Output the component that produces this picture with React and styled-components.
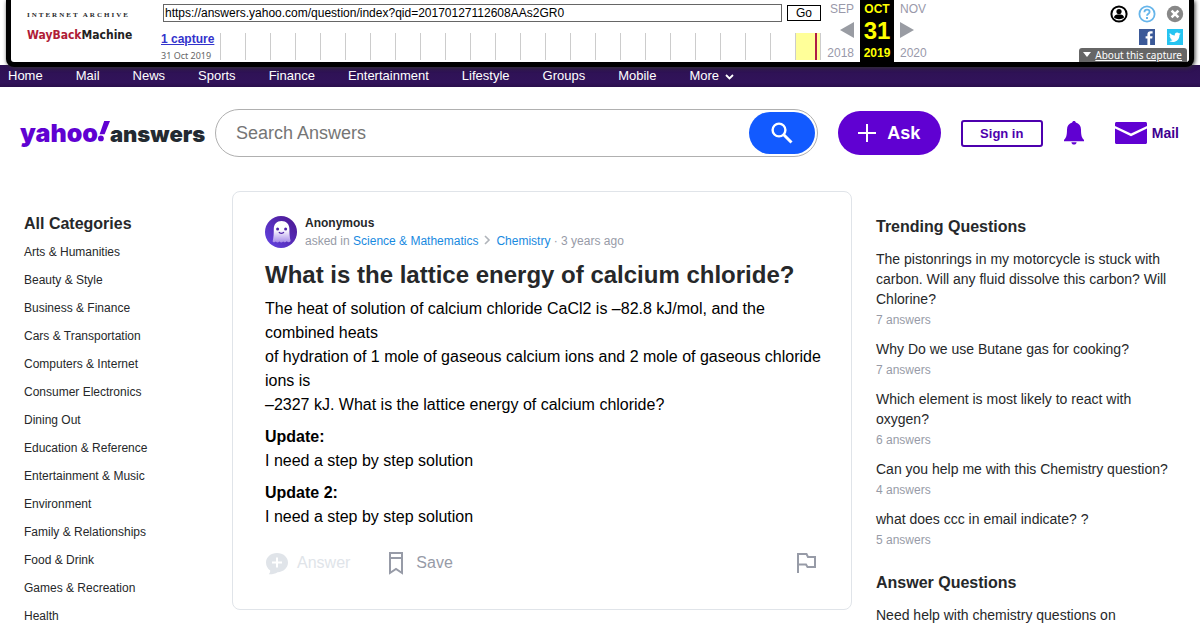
import React from 'react';
import styled, { createGlobalStyle } from 'styled-components';

const navLinks = [
  'Home',
  'Mail',
  'News',
  'Sports',
  'Finance',
  'Entertainment',
  'Lifestyle',
  'Groups',
  'Mobile',
];

const categories = [
  'Arts & Humanities',
  'Beauty & Style',
  'Business & Finance',
  'Cars & Transportation',
  'Computers & Internet',
  'Consumer Electronics',
  'Dining Out',
  'Education & Reference',
  'Entertainment & Music',
  'Environment',
  'Family & Relationships',
  'Food & Drink',
  'Games & Recreation',
  'Health',
];

const trending = [
  {
    title:
      'The pistonrings in my motorcycle is stuck with carbon. Will any fluid dissolve this carbon? Will Chlorine?',
    answers: 7,
  },
  { title: 'Why Do we use Butane gas for cooking?', answers: 7 },
  { title: 'Which element is most likely to react with oxygen?', answers: 6 },
  { title: 'Can you help me with this Chemistry question?', answers: 4 },
  { title: 'what does ccc in email indicate? ?', answers: 5 },
];

const years = Array.from({ length: 24 }, (_, i) => 1996 + i);

const ArchiveBar = () => (
  <Toolbar>
    <ArchiveLogo href='#archive'>
      <small>INTERNET ARCHIVE</small>
      <strong>
        <em>WayBack</em>Machine
      </strong>
    </ArchiveLogo>
    <Lookup>
      <UrlForm onSubmit={(e) => e.preventDefault()}>
        <input
          type='text'
          aria-label='Archived address'
          defaultValue='https://answers.yahoo.com/question/index?qid=20170127112608AAs2GR0'
        />
        <button type='submit'>Go</button>
      </UrlForm>
      <Captures>
        <CaptureCount>
          <a href='#captures'>1 capture</a>
          <span>31 Oct 2019</span>
        </CaptureCount>
        <Timeline>
          {years.map((year) => (
            <Year key={year} $active={year === 2019} />
          ))}
        </Timeline>
      </Captures>
    </Lookup>
    <DateColumn $align='right'>
      <span>SEP</span>
      <svg width='14' height='16' viewBox='0 0 14 16'>
        <path d='M14 0v16L0 8z' fill='#999ca3' />
      </svg>
      <span>2018</span>
    </DateColumn>
    <CurrentDate>
      <span>OCT</span>
      <strong>31</strong>
      <span>2019</span>
    </CurrentDate>
    <DateColumn $align='left'>
      <span>NOV</span>
      <svg width='14' height='16' viewBox='0 0 14 16'>
        <path d='M0 0v16l14-8z' fill='#999ca3' />
      </svg>
      <span>2020</span>
    </DateColumn>
    <Tools>
      <ToolRow>
        <IconButton aria-label='Account'>
          <svg width='18' height='18' viewBox='0 0 18 18'>
            <circle cx='9' cy='9' r='7.6' fill='#fff' stroke='#000' strokeWidth='2' />
            <circle cx='9' cy='6.6' r='2.6' />
            <path d='M4 12.6c0-2 2-3.2 3.4-3.2h3.2c1.400 0 3.400 1.200 3.400 3.200-1.200 1-3 1.600-5 1.600s-3.800-.6-5-1.600z' />
          </svg>
        </IconButton>
        <IconButton aria-label='Help'>
          <svg width='18' height='18' viewBox='0 0 18 18' fill='none' stroke='#66b5ea'>
            <circle cx='9' cy='9' r='7.6' strokeWidth='1.800' />
            <path d='M6.400 7.200c0-3.400 5.200-3.200 5.200-.2 0 1.800-2.600 1.900-2.600 3.800' strokeWidth='1.800' />
            <path d='M9 12v2' strokeWidth='2' />
          </svg>
        </IconButton>
        <IconButton aria-label='Close'>
          <svg width='18' height='18' viewBox='0 0 18 18'>
            <circle cx='9' cy='9' r='8.200' fill='#888' />
            <path d='M5.600 5.600l6.800 6.800M12.400 5.600l-6.800 6.800' stroke='#fff' strokeWidth='2.600' />
          </svg>
        </IconButton>
      </ToolRow>
      <ToolRow>
        <IconButton aria-label='Share on Facebook'>
          <svg width='16' height='16' viewBox='0 0 16 16'>
            <path d='M0 0h16v16H0z' fill='#3b5998' />
            <path
              d='M8.400 16V9.600H6.600V7.200h1.800V5.400c0-2 1.200-3.200 3.200-3.200h2v2.400h-1.400c-.8 0-1.100.4-1.100 1.100v1.500h2.500l-.4 2.400h-2.100V16z'
              fill='#fff'
            />
          </svg>
        </IconButton>
        <IconButton aria-label='Share on Twitter'>
          <svg width='16' height='16' viewBox='0 0 16 16'>
            <path d='M0 0h16v16H0z' fill='#26c4f1' />
            <path
              d='M13.700 4.600c-.4.200-.9.300-1.300.4.500-.3.800-.7 1-1.300-.500.300-1 .5-1.500.6a2.400 2.400 0 0 0-4.100 2.200C5.800 6.400 4 5.400 2.900 4c-.7 1.100-.3 2.500.7 3.200-.4 0-.7-.1-1.100-.3 0 1.200.8 2.100 1.900 2.400-.3.100-.7.100-1.100 0 .3 1 1.200 1.700 2.300 1.700-1 .8-2.200 1.100-3.500 1 3.900 2.400 10.400.8 10.400-6.200.5-.3.900-.7 1.200-1.200z'
              fill='#fff'
            />
          </svg>
        </IconButton>
      </ToolRow>
      <AboutButton>
        <svg width='8' height='5' viewBox='0 0 8 5'>
          <path d='M0 0h8L4 5z' fill='#fff' />
        </svg>
        <span>About this capture</span>
      </AboutButton>
    </Tools>
  </Toolbar>
);

const Header = () => (
  <HeaderBar>
    <YahooLogo href='#home' aria-label='Yahoo Answers'>
      <span>yahoo</span>
      <svg width='12' height='22' viewBox='0 0 12 22' fill='#6001d2'>
        <path d='M6.200 0H12L6.600 13.200H1.600z' />
        <circle cx='2.900' cy='17.400' r='2.900' />
      </svg>
      <strong>answers</strong>
    </YahooLogo>
    <SearchForm onSubmit={(e) => e.preventDefault()}>
      <input type='text' aria-label='Search Answers' placeholder='Search Answers' />
      <button type='submit' aria-label='Search'>
        <svg width='22' height='22' viewBox='0 0 22 22' fill='none' stroke='#fff'>
          <circle cx='8' cy='8' r='6.400' strokeWidth='2.400' />
          <path d='M12.500 12.500l8 8' strokeWidth='3' />
        </svg>
      </button>
    </SearchForm>
    <AskButton>
      <svg width='18' height='18' viewBox='0 0 18 18' stroke='#fff' strokeWidth='2'>
        <path d='M9 0v18M0 9h18' />
      </svg>
      Ask
    </AskButton>
    <SignIn href='#signin'>Sign in</SignIn>
    <BellButton aria-label='Notifications'>
      <svg width='20' height='24' viewBox='0 0 20 24' fill='#6001d2'>
        <path d='M10 0c1 0 1.700.7 1.800 1.600C15 2.400 17 5 17 8.400c0 5.600.8 8.600 3 10.400v1.400H0v-1.400c2.200-1.800 3-4.800 3-10.400C3 5 5 2.400 8.200 1.600 8.300.7 9 0 10 0z' />
        <path d='M7.400 21.200h5.200c-.2 1.500-1.200 2.400-2.600 2.400s-2.400-.9-2.600-2.400z' />
      </svg>
    </BellButton>
    <MailLink href='#mail'>
      <svg width='32' height='22' viewBox='0 0 32 22' fill='#6001d2'>
        <path d='M1.500 0h29c.8 0 1.500.7 1.500 1.500V4L16 11.500 0 4V1.500C0 .7.700 0 1.500 0z' />
        <path d='M0 6.600l16 7.600 16-7.600v13.900c0 .8-.7 1.500-1.500 1.500h-29C.7 22 0 21.300 0 20.500z' />
      </svg>
      Mail
    </MailLink>
  </HeaderBar>
);

const Ghost = () => (
  <svg width='32' height='32' viewBox='0 0 32 32'>
    <defs>
      <linearGradient id='avatar' x1='0' y1='1' x2='1' y2='0'>
        <stop offset='0' stopColor='#6345e6' />
        <stop offset='1' stopColor='#4a148c' />
      </linearGradient>
      <linearGradient id='ghost' x1='0' y1='0' x2='0' y2='1'>
        <stop offset='0.400' stopColor='#fff' />
        <stop offset='1' stopColor='#a58ae8' />
      </linearGradient>
    </defs>
    <circle cx='16' cy='16' r='16' fill='url(#avatar)' />
    <path
      d='M8.800 13c0-4.800 3-8 7.700-8s7.900 3.200 7.900 8c0 4 .2 8 1.200 12-1.200 1.500-2.600 1.600-3.800.2-1.200 1.500-2.600 1.500-3.600.2-1.200 1.500-2.600 1.500-3.800.1-1.200 1.500-2.600 1.400-3.600.1-1 1-2 1-3.200-.2 1.100-4 1.200-8.400 1.200-12.400z'
      fill='url(#ghost)'
    />
    <circle cx='12.600' cy='13' r='1.500' fill='#4f22a8' />
    <circle cx='20.600' cy='13' r='1.500' fill='#4f22a8' />
    <path d='M14 16c.8 1.800 4 1.800 4.800 0' fill='none' stroke='#4f22a8' strokeWidth='1.400' />
  </svg>
);

const Question = () => (
  <Card>
    <Author>
      <Ghost />
      <div>
        <strong>Anonymous</strong>
        <p>
          asked in <a href='#science'>Science &amp; Mathematics</a>
          <svg width='18' height='10' viewBox='0 0 18 10'>
            <path d='M7 1l4 4-4 4' fill='none' stroke='#b0b4ba' strokeWidth='1.600' />
          </svg>
          <a href='#chemistry'>Chemistry</a> · 3 years ago
        </p>
      </div>
    </Author>
    <h1>What is the lattice energy of calcium chloride?</h1>
    <Text>
      The heat of solution of calcium chloride CaCl2 is –82.8 kJ/mol, and the combined heats
      <br />
      of hydration of 1 mole of gaseous calcium ions and 2 mole of gaseous chloride ions is
      <br />
      –2327 kJ. What is the lattice energy of calcium chloride?
    </Text>
    <Text>
      <strong>Update:</strong>
      I need a step by step solution
    </Text>
    <Text>
      <strong>Update 2:</strong>
      I need a step by step solution
    </Text>
    <Actions>
      <ActionButton disabled>
        <svg width='24' height='24' viewBox='0 0 24 24'>
          <path
            d='M12 2c6.200 0 11 4.200 11 9.500S18.400 21 12.600 21.200C10 22.800 7 23.400 3.800 23.200c1-1 1.500-2.200 1.400-3.600C2.600 17.800 1 14.800 1 11.500 1 6.200 5.800 2 12 2z'
            fill='#e0e4e9'
          />
          <path d='M12 6.500v10M7 11.500h10' stroke='#fff' strokeWidth='2' />
        </svg>
        Answer
      </ActionButton>
      <ActionButton>
        <svg width='24' height='24' viewBox='0 0 24 24' fill='none' stroke='#979ba7' strokeWidth='2'>
          <path d='M6 2h12v20l-6-4-6 4z' />
          <path d='M6 7h12' />
        </svg>
        Save
      </ActionButton>
      <ActionButton aria-label='Report'>
        <svg width='24' height='24' viewBox='0 0 24 24' fill='none' stroke='#979ba7' strokeWidth='2'>
          <path d='M5 22V3h8.500l1.500 3h7v10h-7.500L13 13.500H5' />
        </svg>
      </ActionButton>
    </Actions>
  </Card>
);

const App = () => (
  <>
    <GlobalStyle />
    <ArchiveBar />
    <TopNav>
      {navLinks.map((link) => (
        <a key={link} href={`#${link.toLowerCase()}`}>
          {link}
        </a>
      ))}
      <a href='#more'>
        More
        <svg width='9' height='6' viewBox='0 0 9 6'>
          <path d='M1 1l3.500 3.500L8 1' fill='none' stroke='#fff' strokeWidth='1.800' />
        </svg>
      </a>
    </TopNav>
    <Header />
    <Page>
      <Sidebar>
        <h2>All Categories</h2>
        <ul>
          {categories.map((name) => (
            <li key={name}>
              <a href='#category'>{name}</a>
            </li>
          ))}
        </ul>
      </Sidebar>
      <Question />
      <Aside>
        <h2>Trending Questions</h2>
        {trending.map(({ title, answers }) => (
          <Related key={title}>
            <a href='#question'>{title}</a>
            <span>{answers} answers</span>
          </Related>
        ))}
        <h2>Answer Questions</h2>
        <Related>
          <a href='#question'>Need help with chemistry questions on</a>
        </Related>
      </Aside>
    </Page>
  </>
);

const GlobalStyle = createGlobalStyle`
  * {
    box-sizing: border-box;
    margin: 0;
    padding: 0;
  }
  body {
    background: #fff;
    color: #26282a;
    font-family: 'Liberation Sans', Arial, sans-serif;
  }
  a {
    color: inherit;
    text-decoration: none;
  }
  button {
    background: none;
    border: none;
    font-family: inherit;
    cursor: pointer;
  }
  ul {
    list-style: none;
  }
  svg {
    flex: none;
  }
`;

const Toolbar = styled.div`
  position: relative;
  z-index: 1;
  display: flex;
  height: 67px;
  margin: 0 6px -2px;
  background: #fff;
  border: 5px solid #000;
  border-top: none;
  border-radius: 0 0 8px 8px;
  box-shadow: 1px 1px 4px #333;
`;

const ArchiveLogo = styled.a`
  flex: none;
  width: 150px;
  padding: 11px 0 0 16px;
  white-space: nowrap;

  small {
    display: block;
    font: bold 7px/8px 'Liberation Serif', serif;
    letter-spacing: 2px;
  }
  strong {
    display: block;
    font: bold 12px/32px 'DejaVu Sans Condensed', 'DejaVu Sans', sans-serif;
    color: #222;
  }
  em {
    font-style: normal;
    color: #b01c36;
  }
`;

const Lookup = styled.div`
  flex: 0 1 660px;
`;

const UrlForm = styled.form`
  display: flex;
  align-items: center;
  gap: 5px;
  padding: 4px 0 0 2px;

  input {
    flex: 1;
    min-width: 0;
    height: 18px;
    padding: 0 1px;
    border: 1px solid #666;
    font: 12px 'Liberation Sans', Arial, sans-serif;
    color: #000;
  }
  button {
    width: 34px;
    height: 16px;
    border: 1px solid #000;
    font-size: 12px;
    line-height: 14px;
    color: #000;
  }
`;

const Captures = styled.div`
  display: flex;
  justify-content: space-between;
  margin-top: 11px;
`;

const CaptureCount = styled.div`
  display: flex;
  flex-direction: column;

  a {
    font-size: 12px;
    line-height: 13px;
    font-weight: bold;
    color: #33c;
    text-decoration: underline;
  }
  span {
    margin-top: 4px;
    font: 9px/11px 'Noto Sans', sans-serif;
    color: #666;
  }
`;

const Timeline = styled.div`
  display: flex;
  height: 27px;
  border-right: 1px solid #ccc;
`;

const Year = styled.div`
  width: 25px;
  border-left: 1px solid #ccc;
  background: ${({ $active }) =>
    $active
      ? 'linear-gradient(90deg, transparent 19px, #b01c46 19px, #b01c46 21px, transparent 21px) #ff9'
      : 'none'};
`;

const DateColumn = styled.div`
  display: flex;
  flex-direction: column;
  align-items: ${({ $align }) => ($align === 'right' ? 'flex-end' : 'flex-start')};
  width: ${({ $align }) => ($align === 'right' ? '39px' : '34px')};
  padding: 2px 6px 0;
  font-size: 12px;
  line-height: 14px;
  color: #99a;

  svg {
    margin: 6px 0 8px;
  }
`;

const CurrentDate = styled.div`
  display: flex;
  flex-direction: column;
  align-items: center;
  width: 34px;
  padding-top: 2px;
  background: #000;
  color: #ff0;
  font-size: 12px;
  line-height: 14px;
  font-weight: bold;

  strong {
    font-size: 24px;
    line-height: 30px;
  }
`;

const Tools = styled.div`
  display: flex;
  flex: 1;
  flex-direction: column;
  align-items: flex-end;
  gap: 6px;
  padding: 5px 2px 0 0;
`;

const ToolRow = styled.div`
  display: flex;
  gap: 10px;
  padding-right: 3px;

  & + & {
    gap: 12px;
    padding-right: 4px;
  }
`;

const IconButton = styled.button`
  display: block;

  svg {
    display: block;
  }
`;

const AboutButton = styled.button`
  display: flex;
  margin-top: -3px;
  gap: 4px;
  padding: 0 5px 0 4px;
  background: #666;
  border-radius: 3px 3px 0 0;
  color: #fff;
  font: 10px/14px 'Noto Sans', sans-serif;

  svg {
    margin-top: 4px;
  }
  span {
    text-decoration: underline;
    white-space: nowrap;
  }
`;

const TopNav = styled.nav`
  display: flex;
  gap: 33px;
  height: 22px;
  padding: 0 8px;
  background: linear-gradient(#2d1152, #31135a 80%, #2a0f4c);
  color: #fff;
  font-size: 13px;
  line-height: 21px;

  svg {
    margin-left: 6px;
  }
`;

const HeaderBar = styled.header`
  display: flex;
  align-items: center;
  padding: 22px 21px 0 20px;
`;

const YahooLogo = styled.a`
  display: flex;
  align-items: baseline;
  flex: none;
  width: 195px;
  font: 900 25px/30px Inter, sans-serif;
  color: #6001d2;

  svg {
    align-self: flex-start;
    margin-top: 3px;
  }
  strong {
    font-size: 22px;
    font-weight: 900;
    color: #232a31;
  }
`;

const SearchForm = styled.form`
  display: flex;
  flex: 1;
  height: 48px;
  padding: 2px;
  border: 1px solid #b0b0b0;
  border-radius: 24px;

  input {
    flex: 1;
    min-width: 0;
    padding: 0 18px;
    border: none;
    outline: none;
    background: none;
    font: 18px 'Liberation Sans', Arial, sans-serif;

    &::placeholder {
      color: #757575;
    }
  }
  button {
    display: flex;
    align-items: center;
    justify-content: center;
    width: 66px;
    background: #125aff;
    border-radius: 21px;
  }
`;

const AskButton = styled.button`
  display: flex;
  align-items: center;
  justify-content: center;
  gap: 11px;
  width: 103px;
  height: 44px;
  margin-left: 20px;
  background: #6001d2;
  border-radius: 22px;
  color: #fff;
  font-size: 18px;
  font-weight: bold;
`;

const SignIn = styled.a`
  width: 82px;
  margin-left: 20px;
  border: 2px solid #4d00ae;
  border-radius: 3px;
  color: #4d00ae;
  font-size: 13px;
  line-height: 23px;
  font-weight: bold;
  text-align: center;
`;

const BellButton = styled(IconButton)`
  margin-left: 21px;
`;

const MailLink = styled.a`
  display: flex;
  align-items: center;
  gap: 5px;
  margin-left: 31px;
  color: #400090;
  font-size: 14px;
  font-weight: bold;
`;

const Page = styled.div`
  display: flex;
  align-items: flex-start;
  gap: 24px;
  padding: 34px 24px 0;

  h2 {
    font-size: 16px;
    line-height: 20px;
  }
`;

const Sidebar = styled.nav`
  flex: none;
  width: 184px;
  padding-top: 23px;
  font-size: 12px;
  line-height: 28px;

  ul {
    margin-top: 4px;
  }
`;

const Card = styled.main`
  flex: 1;
  padding: 24px 24px 34px 32px;
  border: 1px solid #e0e4e9;
  border-radius: 8px;

  h1 {
    margin: 7px 0 6px;
    font-size: 24px;
    line-height: 32px;
  }
`;

const Author = styled.div`
  display: flex;
  gap: 8px;
  font-size: 12px;
  color: #979ba7;

  strong {
    display: block;
    line-height: 14px;
    color: #26282a;
  }
  p {
    line-height: 22px;
  }
  a {
    color: #188adf;
  }
`;

const Text = styled.p`
  margin-bottom: 8px;
  font-size: 16px;
  line-height: 24px;
  color: #000;

  strong {
    display: block;
  }
`;

const Actions = styled.div`
  display: flex;
  gap: 34px;
  margin-top: 22px;
  padding-right: 10px;
`;

const ActionButton = styled.button`
  display: flex;
  align-items: center;
  gap: 8px;
  font-size: 16px;
  line-height: 24px;
  color: #979ba7;

  &:disabled {
    color: #e0e4e9;
  }
  &:last-child {
    margin-left: auto;
  }
`;

const Aside = styled.aside`
  flex: none;
  width: 300px;
  padding-top: 26px;
`;

const Related = styled.div`
  margin: 12px 0 22px;
  font-size: 14px;
  line-height: 20px;

  & + & {
    margin-top: -14px;
  }
  a {
    display: block;
  }
  span {
    display: block;
    font-size: 12px;
    line-height: 22px;
    color: #979ba7;
  }
`;

export default App;
